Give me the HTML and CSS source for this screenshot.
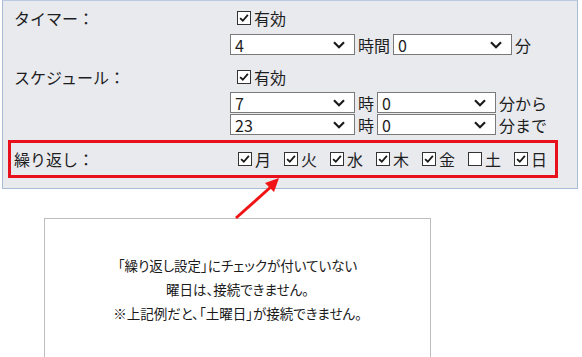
FILE: index.html
```html
<!DOCTYPE html>
<html lang="ja">
<head>
    <meta charset="UTF-8">
    <meta name="viewport" content="width=device-width, initial-scale=1.0">
    <title>接続スケジュール設定</title>
    <link rel="stylesheet" href="styles.css">
</head>
<body>
    <div class="page">
        <!-- Settings panel -->
        <div class="panel">
            <div class="row row-timer">
                <div class="label">タイマー：</div>
                <div class="controls">
                    <div class="check-line">
                        <span class="box checked"><svg viewBox="0 0 13 13"><path d="M2.3 6.6 L5.2 9.5 L10.7 3.2"/></svg></span>
                        <span>有効</span>
                    </div>
                    <div class="time-line">
                        <div class="select sel-wide"><span>4</span><svg viewBox="0 0 12 8"><path d="M1 1.2 L6 6.2 L11 1.2"/></svg></div>
                        <span class="unit">時間</span>
                        <div class="select"><span>0</span><svg viewBox="0 0 12 8"><path d="M1 1.2 L6 6.2 L11 1.2"/></svg></div>
                        <span class="unit">分</span>
                    </div>
                </div>
            </div>

            <div class="row row-schedule">
                <div class="label">スケジュール：</div>
                <div class="controls">
                    <div class="check-line">
                        <span class="box checked"><svg viewBox="0 0 13 13"><path d="M2.3 6.6 L5.2 9.5 L10.7 3.2"/></svg></span>
                        <span>有効</span>
                    </div>
                    <div class="time-line first">
                        <div class="select sel-wide"><span>7</span><svg viewBox="0 0 12 8"><path d="M1 1.2 L6 6.2 L11 1.2"/></svg></div>
                        <span class="unit">時</span>
                        <div class="select"><span>0</span><svg viewBox="0 0 12 8"><path d="M1 1.2 L6 6.2 L11 1.2"/></svg></div>
                        <span class="unit">分から</span>
                    </div>
                    <div class="time-line second">
                        <div class="select sel-wide"><span>23</span><svg viewBox="0 0 12 8"><path d="M1 1.2 L6 6.2 L11 1.2"/></svg></div>
                        <span class="unit">時</span>
                        <div class="select"><span>0</span><svg viewBox="0 0 12 8"><path d="M1 1.2 L6 6.2 L11 1.2"/></svg></div>
                        <span class="unit">分まで</span>
                    </div>
                </div>
            </div>

            <!-- Highlighted repeat row -->
            <div class="repeat">
                <div class="label">繰り返し：</div>
                <div class="days">
                    <div class="day"><span class="box checked"><svg viewBox="0 0 13 13"><path d="M2.3 6.6 L5.2 9.5 L10.7 3.2"/></svg></span><span>月</span></div>
                    <div class="day"><span class="box checked"><svg viewBox="0 0 13 13"><path d="M2.3 6.6 L5.2 9.5 L10.7 3.2"/></svg></span><span>火</span></div>
                    <div class="day"><span class="box checked"><svg viewBox="0 0 13 13"><path d="M2.3 6.6 L5.2 9.5 L10.7 3.2"/></svg></span><span>水</span></div>
                    <div class="day"><span class="box checked"><svg viewBox="0 0 13 13"><path d="M2.3 6.6 L5.2 9.5 L10.7 3.2"/></svg></span><span>木</span></div>
                    <div class="day"><span class="box checked"><svg viewBox="0 0 13 13"><path d="M2.3 6.6 L5.2 9.5 L10.7 3.2"/></svg></span><span>金</span></div>
                    <div class="day"><span class="box"></span><span>土</span></div>
                    <div class="day"><span class="box checked"><svg viewBox="0 0 13 13"><path d="M2.3 6.6 L5.2 9.5 L10.7 3.2"/></svg></span><span>日</span></div>
                </div>
            </div>
        </div>

        <!-- Red arrow pointing at the repeat row -->
        <svg class="arrow" width="60" height="50" viewBox="0 0 60 50">
            <path class="arrow-line" d="M14 46 L51 13"/>
            <path class="arrow-head" d="M57 6 L43 11 L52 20 Z"/>
        </svg>

        <!-- Note box -->
        <div class="note">
            <p>「繰り返し設定」にチェックが付いていない</p>
            <p>曜日は、接続できません。</p>
            <p>※上記例だと、「土曜日」が接続できません。</p>
        </div>
    </div>
</body>
</html>
```

FILE: styles.css
```css
/* Base */
body {
    margin: 0;
    background-color: #ffffff;
    font-family: "Noto Sans CJK JP", "Noto Sans", sans-serif;
    color: #1e1e1e;
}

.page {
    position: relative;
    width: 582px;
    height: 357px;
    overflow: hidden;
}

/* Settings panel */
.panel {
    margin-left: 2px;
    width: 576px;
    height: 189px;
    box-sizing: border-box;
    border: 1px solid #a9bcd6;
    border-top-color: #b9cae0;
    background-color: #e8eaee;
    padding-top: 8px;
}

.row {
    display: flex;
    padding-left: 11px;
}

.label {
    width: 216px;
    flex-shrink: 0;
    font-size: 16px;
    line-height: 18px;
}

.controls {
    display: flex;
    flex-direction: column;
}

.check-line {
    display: flex;
    align-items: center;
    gap: 3px;
    height: 18px;
    padding-left: 7px;
    font-size: 16px;
}

/* Checkbox */
.box {
    display: inline-flex;
    align-items: center;
    justify-content: center;
    width: 14px;
    height: 14px;
    box-sizing: border-box;
    border: 1px solid #333333;
    background-color: #ffffff;
}

.box svg {
    width: 12px;
    height: 12px;
}

.box path {
    fill: none;
    stroke: #1a1a1a;
    stroke-width: 2;
}

/* Time selects */
.time-line {
    display: flex;
    align-items: center;
    gap: 3px;
    margin-top: 7px;
    font-size: 16px;
}

.row-schedule {
    margin-top: 13px;
}

.row-schedule .time-line.first {
    margin-top: 6px;
}

.row-schedule .time-line.second {
    margin-top: 1px;
}

.select {
    display: flex;
    align-items: center;
    justify-content: space-between;
    width: 119px;
    height: 21px;
    box-sizing: border-box;
    border: 1px solid #7a7a7a;
    background-color: #ffffff;
    padding: 0 9px 0 4px;
    font-size: 16px;
}

.select.sel-wide {
    width: 125px;
}

.select svg {
    width: 12px;
    height: 8px;
}

.select path {
    fill: none;
    stroke: #1a1a1a;
    stroke-width: 2.2;
}

.unit {
    line-height: 18px;
}

/* Repeat row with red highlight */
.repeat {
    display: flex;
    align-items: center;
    margin: 5px 0 0 5px;
    width: 550px;
    height: 38px;
    box-sizing: border-box;
    border: 3px solid #e8101a;
    padding-left: 3px;
}

.repeat .label {
    width: 224px;
}

.days {
    display: flex;
    gap: 13px;
}

.day {
    display: flex;
    align-items: center;
    gap: 3px;
    font-size: 16px;
    line-height: 18px;
}

/* Arrow overlay */
.arrow {
    position: absolute;
    left: 222px;
    top: 172px;
}

.arrow-line {
    stroke: #f01414;
    stroke-width: 3;
    fill: none;
}

.arrow-head {
    fill: #f01414;
}

/* Note box */
.note {
    margin: 29px 0 0 44px;
    width: 387px;
    height: 140px;
    box-sizing: border-box;
    border: 1px solid #bdbdbd;
    padding-top: 34px;
    text-align: center;
    font-size: 13.5px;
    font-feature-settings: "palt";
    color: #1a1a1a;
}

.note p {
    margin: 0;
    line-height: 24px;
}
```
